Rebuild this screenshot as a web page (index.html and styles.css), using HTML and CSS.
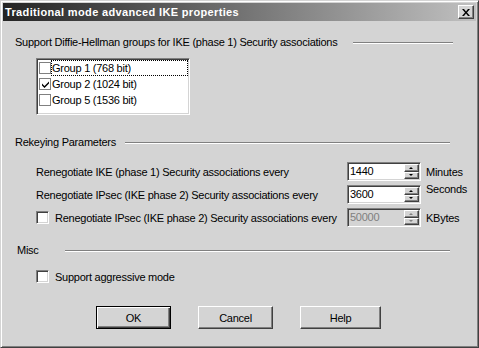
FILE: index.html
```html
<!DOCTYPE html>
<html lang="en">

<head>
    <meta charset="UTF-8">
    <title>Traditional mode advanced IKE properties</title>
    <link rel="stylesheet" href="styles.css">
</head>

<body>
    <div class="dialog">
        <div class="titlebar">
            <span class="title">Traditional mode advanced IKE properties</span>
            <span class="close-btn">
                <svg width="8" height="7" viewBox="0 0 8 7">
                    <path d="M0 0h2l2 2.5L6 0h2L5 3.5 8 7H6L4 4.5 2 7H0l3-3.5z" fill="#000"/>
                </svg>
            </span>
        </div>

        <div class="content">
            <div class="section-head">
                <span>Support Diffie-Hellman groups for IKE (phase 1) Security associations</span>
                <span class="rule rule-groups"></span>
            </div>

            <div class="listbox">
                <div class="item focused"><span class="lbox"></span><span class="itext">Group 1 (768 bit)</span></div>
                <div class="item"><span class="lbox checked">
                        <svg width="7" height="7" viewBox="0 0 7 7"><path d="M0 2.5l2.5 2.5L7 0.5v2L2.5 7 0 4.5z" fill="#000"/></svg>
                    </span><span class="itext">Group 2 (1024 bit)</span></div>
                <div class="item"><span class="lbox"></span><span class="itext">Group 5 (1536 bit)</span></div>
            </div>

            <div class="section-head head-rekey">
                <span>Rekeying Parameters</span>
                <span class="rule rule-rekey"></span>
            </div>

            <div class="params">
                <div class="plabel">Renegotiate IKE (phase 1) Security associations every</div>
                <div class="spin">
                    <span class="spin-value">1440</span>
                    <span class="spin-btns"><span class="sbtn up"></span><span class="sbtn down"></span></span>
                </div>
                <div class="unit">Minutes</div>

                <div class="plabel">Renegotiate IPsec (IKE phase 2) Security associations every</div>
                <div class="spin">
                    <span class="spin-value">3600</span>
                    <span class="spin-btns"><span class="sbtn up"></span><span class="sbtn down"></span></span>
                </div>
                <div class="unit unit-high">Seconds</div>

                <div class="plabel"><span class="check"></span>Renegotiate IPsec (IKE phase 2) Security associations every</div>
                <div class="spin disabled">
                    <span class="spin-value">50000</span>
                    <span class="spin-btns"><span class="sbtn up"></span><span class="sbtn down"></span></span>
                </div>
                <div class="unit">KBytes</div>
            </div>

            <div class="section-head head-misc">
                <span>Misc</span>
                <span class="rule rule-misc"></span>
            </div>

            <div class="check-row"><span class="check"></span>Support aggressive mode</div>

            <div class="buttons">
                <div class="btn default"><span>OK</span></div>
                <div class="btn"><span>Cancel</span></div>
                <div class="btn btn-help"><span>Help</span></div>
            </div>
        </div>
    </div>
</body>

</html>
```

FILE: styles.css
```css
body {
    margin: 0px;
    font-family: "Liberation Sans", Arial, sans-serif;
    font-size: 11px;
    letter-spacing: -0.25px;
    white-space: nowrap;
    color: black;
    background-color: rgb(212, 212, 212);
}

.dialog {
    width: 479px;
    height: 348px;
    box-sizing: border-box;
    padding: 2px;
    border: 1px solid;
    border-color: rgb(212, 212, 212) rgb(64, 64, 64) rgb(64, 64, 64) rgb(212, 212, 212);
    box-shadow: inset 1px 1px white, inset -1px -1px rgb(128, 128, 128);
    background-color: rgb(212, 212, 212);
}

/* title bar */
.titlebar {
    height: 18px;
    display: flex;
    align-items: center;
    padding: 0px 2px;
    background: linear-gradient(to right, rgb(36, 36, 36), rgb(192, 192, 192));
}

.title {
    flex: 1;
    color: white;
    font-weight: bold;
    font-size: 11px;
    letter-spacing: 0.35px;
}

.close-btn {
    width: 16px;
    height: 14px;
    box-sizing: border-box;
    display: flex;
    align-items: center;
    justify-content: center;
    background-color: rgb(212, 212, 212);
    border: 1px solid;
    border-color: white rgb(64, 64, 64) rgb(64, 64, 64) white;
    box-shadow: inset -1px -1px rgb(128, 128, 128);
}

/* main area */
.content {
    padding-left: 12px;
}

.section-head {
    display: flex;
    height: 13px;
    line-height: 13px;
    margin-top: 15px;
}

.rule {
    margin-left: auto;
    margin-top: 6px;
    height: 0px;
    border-top: 1px solid rgb(128, 128, 128);
    border-bottom: 1px solid white;
}

.rule-groups {
    width: 100px;
    margin-right: 23px;
}

.rule-rekey {
    width: 325px;
    margin-right: 26px;
}

.rule-misc {
    width: 385px;
    margin-right: 26px;
}

.head-rekey {
    margin-top: 21px;
}

.head-misc {
    margin-top: 17px;
    padding-left: 2px;
}

/* list with check boxes */
.listbox {
    margin-top: 9px;
    margin-left: 21px;
    width: 154px;
    height: 57px;
    box-sizing: border-box;
    background-color: white;
    border: 1px solid;
    border-color: rgb(128, 128, 128) white white rgb(128, 128, 128);
    box-shadow: inset 1px 1px rgb(64, 64, 64), inset -1px -1px rgb(212, 212, 212);
    padding: 1px 1px 0px 2px;
}

.item {
    display: flex;
    align-items: center;
    height: 16px;
}

.lbox {
    width: 12px;
    height: 12px;
    box-sizing: border-box;
    border: 1px solid rgb(128, 128, 128);
    display: flex;
    align-items: center;
    justify-content: center;
    flex: none;
}

.itext {
    flex: 1;
    height: 16px;
    line-height: 16px;
    padding-left: 1px;
    box-sizing: border-box;
}

.focused .itext {
    outline: 1px dotted black;
    outline-offset: -1px;
}

/* rekeying rows */
.params {
    margin-top: 13px;
    margin-left: 21px;
    display: grid;
    grid-template-columns: 306px 74px auto;
    grid-auto-rows: 19px;
    column-gap: 5px;
    row-gap: 4px;
    align-items: center;
}

.plabel {
    display: flex;
    align-items: center;
}

.unit-high {
    align-self: start;
    margin-top: -2px;
}

.check {
    width: 13px;
    height: 13px;
    box-sizing: border-box;
    background-color: white;
    border: 1px solid;
    border-color: rgb(128, 128, 128) white white rgb(128, 128, 128);
    box-shadow: inset 1px 1px rgb(64, 64, 64), inset -1px -1px rgb(212, 212, 212);
    margin-right: 6px;
    flex: none;
}

.spin {
    height: 19px;
    box-sizing: border-box;
    display: flex;
    background-color: white;
    border: 1px solid;
    border-color: rgb(128, 128, 128) white white rgb(128, 128, 128);
    box-shadow: inset 1px 1px rgb(64, 64, 64), inset -1px -1px rgb(212, 212, 212);
    padding: 1px;
}

.spin-value {
    flex: 1;
    line-height: 15px;
    padding-left: 1px;
}

.disabled {
    background-color: rgb(212, 212, 212);
}

.disabled .spin-value {
    color: rgb(128, 128, 128);
}

.spin-btns {
    width: 15px;
    display: flex;
    flex-direction: column;
}

.sbtn {
    flex: 1;
    position: relative;
    background-color: rgb(212, 212, 212);
    border: 1px solid;
    border-color: white rgb(64, 64, 64) rgb(64, 64, 64) white;
    box-shadow: inset -1px -1px rgb(128, 128, 128);
}

.sbtn::after {
    content: "";
    position: absolute;
    left: 4px;
    top: 2px;
    border-left: 2px solid transparent;
    border-right: 2px solid transparent;
}

.up::after {
    border-bottom: 2px solid black;
}

.down::after {
    top: 1px;
    border-top: 2px solid black;
}

.disabled .up::after {
    border-bottom-color: rgb(128, 128, 128);
}

.disabled .down::after {
    border-top-color: rgb(128, 128, 128);
}

.check-row {
    display: flex;
    align-items: center;
    margin-top: 13px;
    margin-left: 21px;
    height: 13px;
}

/* push buttons */
.buttons {
    display: flex;
    gap: 27px;
    margin-top: 23px;
    margin-left: 81px;
}

.btn {
    width: 75px;
    height: 23px;
    box-sizing: border-box;
    display: flex;
    align-items: center;
    justify-content: center;
    border: 1px solid;
    border-color: white rgb(64, 64, 64) rgb(64, 64, 64) white;
    box-shadow: inset -1px -1px rgb(128, 128, 128);
}

.btn.default {
    border: 1px solid black;
    box-shadow: inset 1px 1px white, inset -1px -1px rgb(64, 64, 64), inset -2px -2px rgb(128, 128, 128);
}

.btn-help {
    width: 81px;
}
```
